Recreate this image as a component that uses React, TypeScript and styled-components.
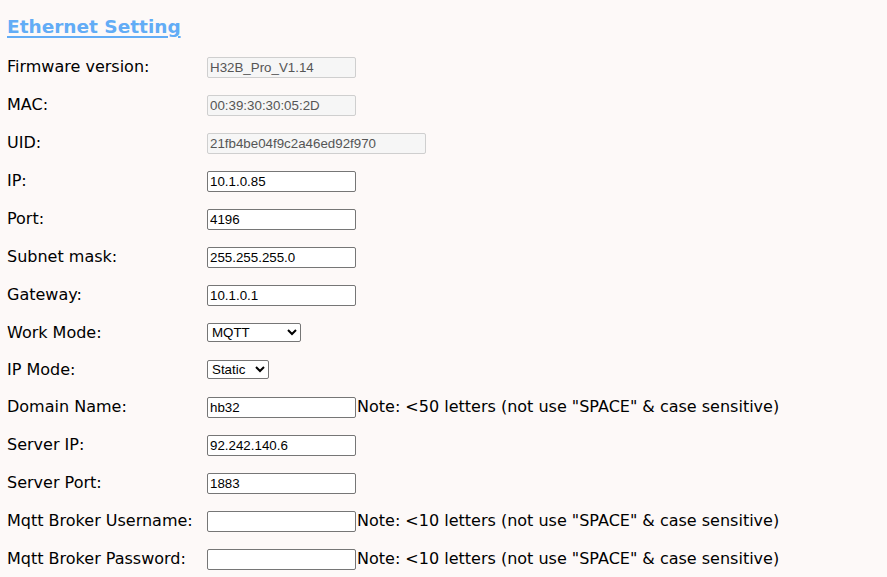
import React from "react";
import styled, { createGlobalStyle } from "styled-components";

const GlobalStyle = createGlobalStyle`
  html, body {
    margin: 0;
    padding: 0;
    background: #fdf9f8;
  }
  body {
    font-family: "DejaVu Sans", Verdana, sans-serif;
    color: #000;
  }
`;

const Page = styled.div`
  padding: 16px 6px 0 6px;
`;

const Heading = styled.h3`
  margin: 0 0 10px 1px;
  font-family: "DejaVu Sans", Verdana, sans-serif;
  font-weight: bold;
  font-size: 18.5px;
  line-height: 22px;
  color: #62acf6;
  text-decoration: underline;
  text-underline-offset: 3px;
  text-decoration-thickness: 2px;
`;

const Form = styled.div`
  display: flex;
  flex-direction: column;
`;

const FormRow = styled.div<{ $h: number }>`
  display: grid;
  grid-template-columns: 201px auto;
  height: ${(p) => p.$h}px;
  align-items: center;
  justify-content: start;
`;

const Label = styled.div`
  font-size: 16px;
  line-height: 20px;
  padding-left: 1px;
  white-space: nowrap;
`;

const Field = styled.div`
  display: flex;
  align-items: center;
  white-space: nowrap;
`;

const TextInput = styled.input<{ $w?: number }>`
  box-sizing: border-box;
  width: ${(p) => p.$w ?? 149}px;
  height: 21px;
  margin: 0;
  padding: 1px 2px;
  border: 1px solid #767676;
  border-radius: 2px;
  background: #fff;
  color: #000;
  font-family: "Liberation Sans", Arial, sans-serif;
  font-size: 13.33px;
  outline: none;

  &:disabled {
    border-color: #cfcfcf;
    background: #f6f6f6;
    color: #555;
  }
`;

const Select = styled.select<{ $w: number }>`
  box-sizing: border-box;
  width: ${(p) => p.$w}px;
  height: 19px;
  margin: 0;
  border: 1px solid #767676;
  border-radius: 2px;
  background: #fff;
  color: #000;
  font-family: "Liberation Sans", Arial, sans-serif;
  font-size: 13.33px;
`;

const Note = styled.span`
  font-size: 16px;
  line-height: 20px;
  margin-left: 1px;
`;

type Row =
  | { label: string; kind: "ro"; value: string; w?: number }
  | { label: string; kind: "text"; value: string; note?: string }
  | { label: string; kind: "select"; value: string; options: string[]; w: number };

const NOTE50 = 'Note: <50 letters (not use "SPACE" & case sensitive)';
const NOTE10 = 'Note: <10 letters (not use "SPACE" & case sensitive)';

const rows: Row[] = [
  { label: "Firmware version:", kind: "ro", value: "H32B_Pro_V1.14" },
  { label: "MAC:", kind: "ro", value: "00:39:30:30:05:2D" },
  { label: "UID:", kind: "ro", value: "21fb4be04f9c2a46ed92f970", w: 219 },
  { label: "IP:", kind: "text", value: "10.1.0.85" },
  { label: "Port:", kind: "text", value: "4196" },
  { label: "Subnet mask:", kind: "text", value: "255.255.255.0" },
  { label: "Gateway:", kind: "text", value: "10.1.0.1" },
  { label: "Work Mode:", kind: "select", value: "MQTT", options: ["MQTT", "TCP Server", "TCP Client", "UDP"], w: 94 },
  { label: "IP Mode:", kind: "select", value: "Static", options: ["Static", "DHCP"], w: 62 },
  { label: "Domain Name:", kind: "text", value: "hb32", note: NOTE50 },
  { label: "Server IP:", kind: "text", value: "92.242.140.6" },
  { label: "Server Port:", kind: "text", value: "1883" },
  { label: "Mqtt Broker Username:", kind: "text", value: "", note: NOTE10 },
  { label: "Mqtt Broker Password:", kind: "text", value: "", note: NOTE10 },
];

export default function App() {
  return (
    <>
      <GlobalStyle />
      <Page>
        <Heading>Ethernet Setting</Heading>
        <Form>
          {rows.map((r) => (
            <FormRow key={r.label} $h={r.kind === "select" ? 37 : 38}>
              <Label>{r.label}</Label>
              <Field>
                {r.kind === "ro" && <TextInput disabled $w={r.w} defaultValue={r.value} />}
                {r.kind === "text" && (
                  <>
                    <TextInput defaultValue={r.value} />
                    {r.note && <Note>{r.note}</Note>}
                  </>
                )}
                {r.kind === "select" && (
                  <Select $w={r.w} defaultValue={r.value}>
                    {r.options.map((o) => (
                      <option key={o}>{o}</option>
                    ))}
                  </Select>
                )}
              </Field>
            </FormRow>
          ))}
        </Form>
      </Page>
    </>
  );
}
